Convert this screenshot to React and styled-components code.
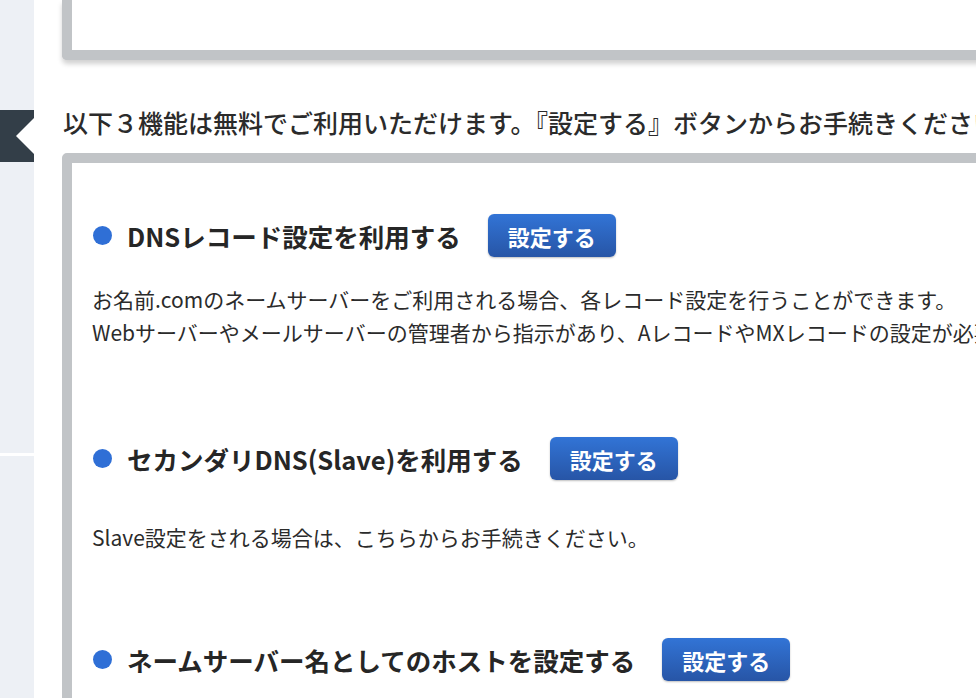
import React from 'react'
import styled, { createGlobalStyle } from 'styled-components'

const GlobalStyle = createGlobalStyle`
  html, body {
    margin: 0;
    padding: 0;
    background: #fff;
    overflow: hidden;
  }
  body {
    font-family: "Noto Sans CJK JP", "Noto Sans", sans-serif;
    color: #333;
  }
`

const sections = [
  {
    title: 'DNSレコード設定を利用する',
    gap: 26,
    after: 88,
    lines: [
      'お名前.comのネームサーバーをご利用される場合、各レコード設定を行うことができます。',
      'Webサーバーやメールサーバーの管理者から指示があり、AレコードやMXレコードの設定が必要な場合はこちらから設定してください。',
    ],
  },
  {
    title: 'セカンダリDNS(Slave)を利用する',
    gap: 41,
    after: 84,
    lines: ['Slave設定をされる場合は、こちらからお手続きください。'],
  },
  {
    title: 'ネームサーバー名としてのホストを設定する',
    gap: 26,
    after: 40,
    lines: [],
  },
]

const App = () => {
  return (
    <>
      <GlobalStyle />
      <Page>
        <Sidebar>
          <Tab />
          <Divider />
        </Sidebar>
        <Main>
          <TopCard />
          <Lead>以下３機能は無料でご利用いただけます。『設定する』ボタンからお手続きください。</Lead>
          <Card>
            {sections.map((s) => (
              <Section key={s.title} $after={s.after}>
                <HeadRow>
                  <Dot />
                  <Title>{s.title}</Title>
                  <SetButton>設定する</SetButton>
                </HeadRow>
                {s.lines.length > 0 && (
                  <Text $gap={s.gap}>
                    {s.lines.map((l) => (
                      <Line key={l}>{l}</Line>
                    ))}
                  </Text>
                )}
              </Section>
            ))}
          </Card>
        </Main>
      </Page>
    </>
  )
}

const Page = styled.div`
  display: flex;
  width: 976px;
  height: 698px;
  overflow: hidden;
`

const Sidebar = styled.div`
  width: 34px;
  flex-shrink: 0;
  background-color: #edf0f5;
  display: flex;
  flex-direction: column;
`

const Tab = styled.div`
  position: relative;
  margin-top: 110px;
  height: 52px;
  flex-shrink: 0;
  background-color: #333e48;

  &::after {
    content: '';
    position: absolute;
    right: 0;
    top: 8px;
    border-top: 18px solid transparent;
    border-bottom: 18px solid transparent;
    border-right: 18px solid #fff;
  }
`

const Divider = styled.div`
  margin-top: 291px;
  height: 3px;
  flex-shrink: 0;
  background-color: #fff;
`

const Main = styled.div`
  flex: 1;
  padding-left: 28px;
  display: flex;
  flex-direction: column;
  min-width: 0;
`

const TopCard = styled.div`
  width: 1100px;
  height: 50px;
  flex-shrink: 0;
  background: #fff;
  border: 10px solid #c1c4c7;
  border-top: none;
  border-radius: 0 0 5px 5px;
  box-shadow: 0 4px 5px rgba(0, 0, 0, 0.18);
`

const Lead = styled.p`
  margin: 47px 0 16px 1px;
  flex-shrink: 0;
  font-size: 25px;
  font-weight: 500;
  line-height: 30px;
  white-space: nowrap;
  color: #2b2b2b;
`

const Card = styled.div`
  width: 1100px;
  flex-shrink: 0;
  border: 10px solid #c1c4c7;
  border-radius: 5px 5px 0 0;
  padding: 51px 0 0 20px;
`

const Section = styled.div`
  display: flex;
  flex-direction: column;
  margin-bottom: ${(p) => p.$after}px;
`

const HeadRow = styled.div`
  display: flex;
  align-items: center;
  height: 43px;
`

const Dot = styled.span`
  width: 19px;
  height: 19px;
  margin-left: 1px;
  border-radius: 50%;
  background-color: #2f6fd6;
  flex-shrink: 0;
`

const Title = styled.h3`
  margin: 0 27px 0 15px;
  font-size: 25.5px;
  font-weight: 700;
  color: #262626;
  white-space: nowrap;
`

const SetButton = styled.button`
  height: 43px;
  padding: 0 20px;
  border: none;
  border-radius: 6px;
  background: linear-gradient(#3274d6, #2755a6);
  box-shadow: 0 1px 2px rgba(0, 0, 0, 0.25);
  color: #fff;
  font-family: inherit;
  font-size: 22px;
  font-weight: 700;
`

const Text = styled.div`
  margin-top: ${(p) => p.$gap}px;
  font-size: 21px;
  line-height: 33px;
  color: #2b2b2b;
  white-space: nowrap;
`

const Line = styled.div``

export default App
